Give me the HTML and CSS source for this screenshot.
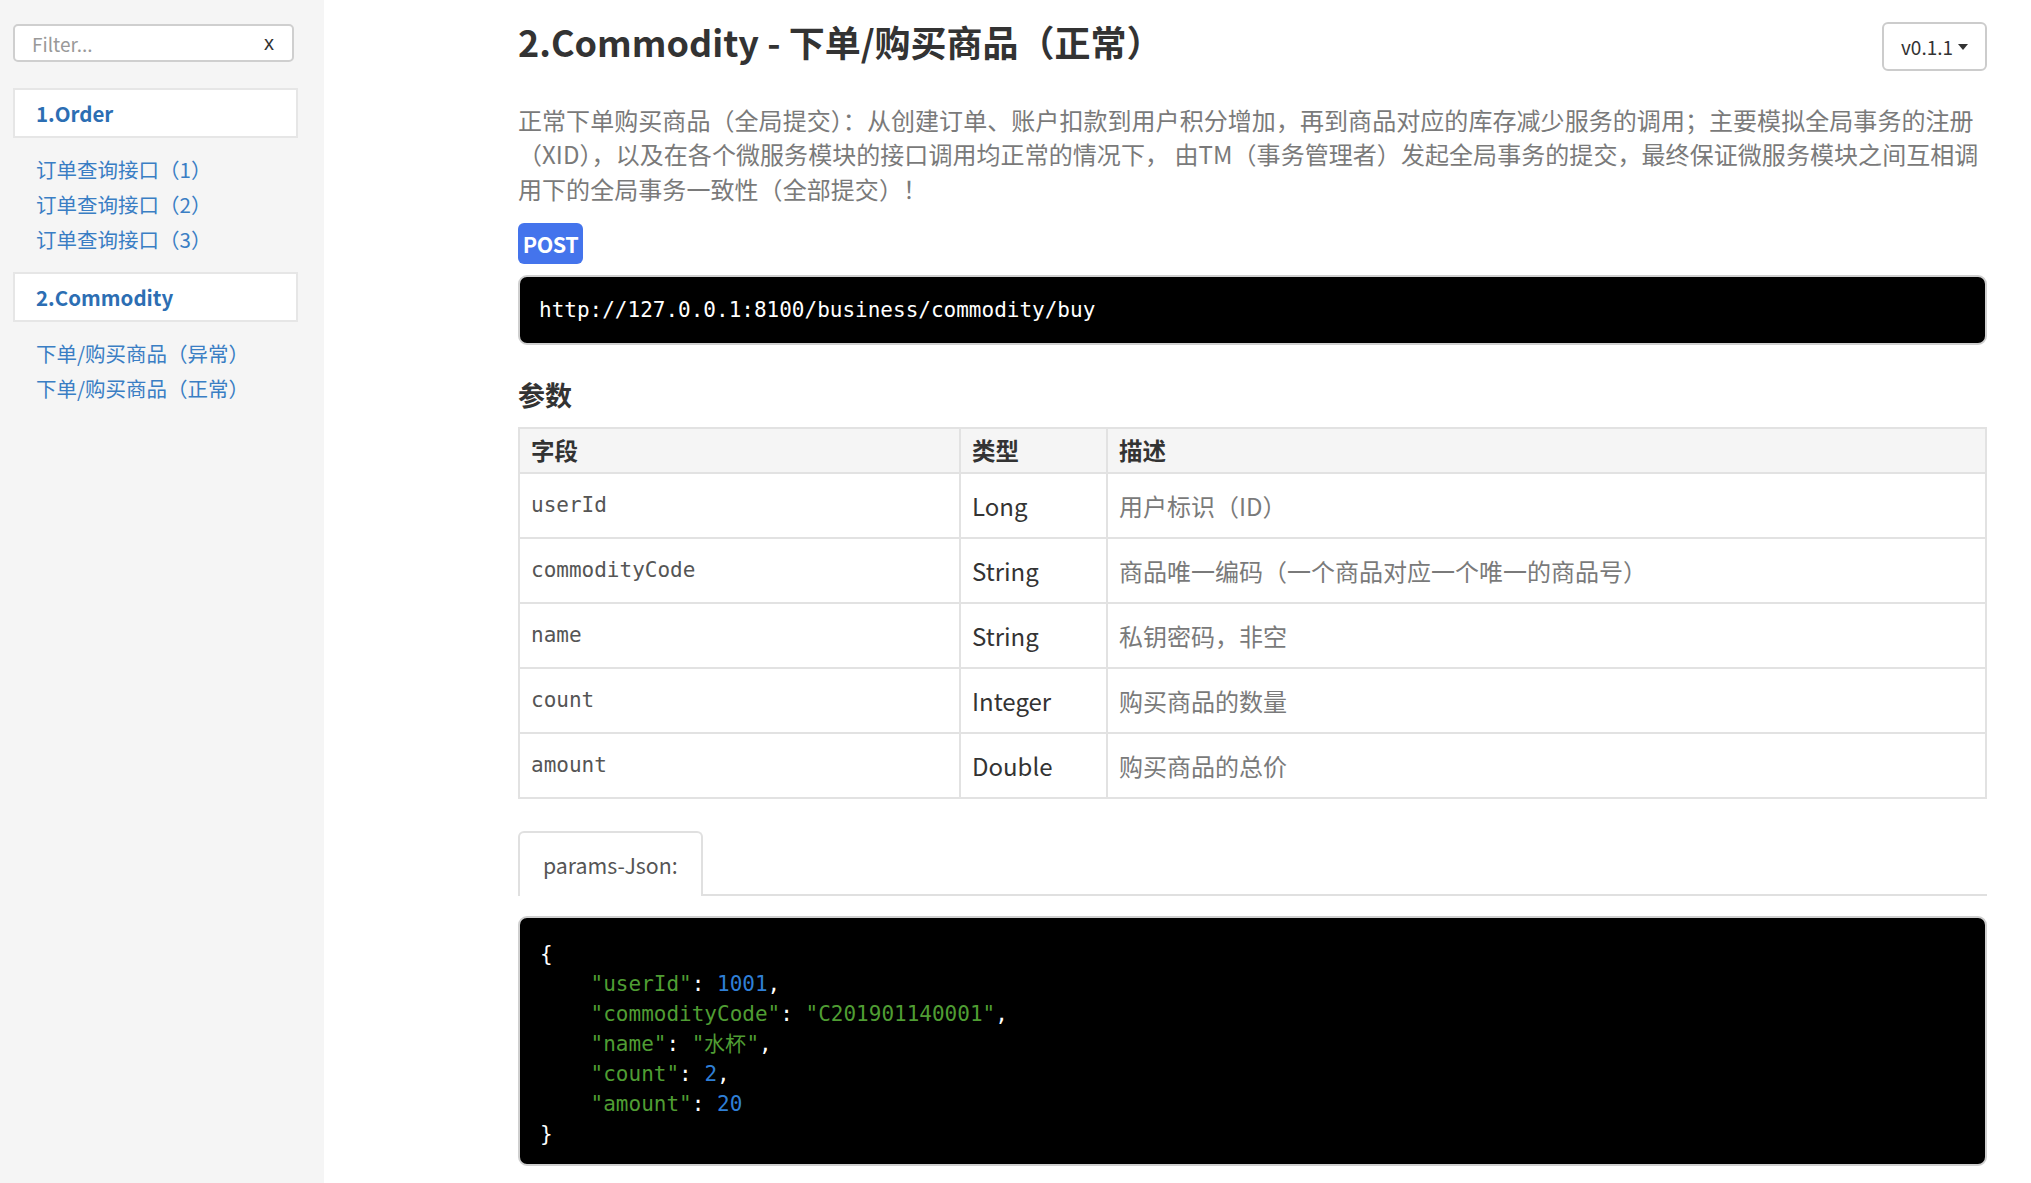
FILE: index.html
```html
<!DOCTYPE html>
<html lang="zh-CN">
<head>
<meta charset="utf-8">
<title>2.Commodity - 下单/购买商品（正常）</title>
<link rel="stylesheet" href="styles.css">
</head>
<body>
<div class="page">
  <aside class="sidebar">
    <div class="filter">
      <input class="filter-input" type="text" placeholder="Filter...">
      <span class="filter-clear">x</span>
    </div>
    <div class="nav-group">
      <div class="nav-header">1.Order</div>
      <ul class="nav-list">
        <li>订单查询接口（1）</li>
        <li>订单查询接口（2）</li>
        <li>订单查询接口（3）</li>
      </ul>
    </div>
    <div class="nav-group">
      <div class="nav-header">2.Commodity</div>
      <ul class="nav-list">
        <li>下单/购买商品（异常）</li>
        <li>下单/购买商品（正常）</li>
      </ul>
    </div>
  </aside>
  <main class="content">
    <div class="head-row">
      <h1 class="title">2.Commodity - 下单/购买商品（正常）</h1>
      <button class="version">v0.1.1<span class="caret"></span></button>
    </div>
    <p class="desc">正常下单购买商品（全局提交）：从创建订单、账户扣款到用户积分增加，再到商品对应的库存减少服务的调用；主要模拟全局事务的注册（XID），以及在各个微服务模块的接口调用均正常的情况下， 由TM（事务管理者）发起全局事务的提交，最终保证微服务模块之间互相调用下的全局事务一致性（全部提交）！</p>
    <span class="method">POST</span>
    <pre class="url">http://127.0.0.1:8100/business/commodity/buy</pre>
    <h2 class="section">参数</h2>
    <table class="params">
      <thead>
        <tr><th class="c1">字段</th><th class="c2">类型</th><th class="c3">描述</th></tr>
      </thead>
      <tbody>
        <tr><td class="field">userId</td><td class="type">Long</td><td class="dsc">用户标识（ID）</td></tr>
        <tr><td class="field">commodityCode</td><td class="type">String</td><td class="dsc">商品唯一编码（一个商品对应一个唯一的商品号）</td></tr>
        <tr><td class="field">name</td><td class="type">String</td><td class="dsc">私钥密码，非空</td></tr>
        <tr><td class="field">count</td><td class="type">Integer</td><td class="dsc">购买商品的数量</td></tr>
        <tr><td class="field">amount</td><td class="type">Double</td><td class="dsc">购买商品的总价</td></tr>
      </tbody>
    </table>
    <div class="tabs">
      <div class="tab active">params-Json:</div>
    </div>
    <pre class="code">{
    <span class="k">"userId"</span>: <span class="n">1001</span>,
    <span class="k">"commodityCode"</span>: <span class="s">"C201901140001"</span>,
    <span class="k">"name"</span>: <span class="s">"水杯"</span>,
    <span class="k">"count"</span>: <span class="n">2</span>,
    <span class="k">"amount"</span>: <span class="n">20</span>
}</pre>
  </main>
</div>
</body>
</html>
```
FILE: styles.css
```css
html, body {
  margin: 0;
  padding: 0;
  background: #fff;
}
body {
  font-family: "Noto Sans CJK SC", "Noto Sans", sans-serif;
  color: #333;
}
.page {
  display: flex;
  min-height: 1183px;
}
.sidebar {
  width: 324px;
  flex: 0 0 324px;
  background: #f5f5f5;
  padding: 24px 26px 0 13px;
  box-sizing: border-box;
}
.filter {
  display: flex;
  align-items: center;
  width: 281px;
  height: 38px;
  box-sizing: border-box;
  border: 2px solid #cfcfcf;
  border-radius: 5px;
  background: #fff;
  padding: 0 18px 0 17px;
}
.filter-input {
  flex: 1;
  border: 0;
  outline: 0;
  background: transparent;
  font-family: "Noto Sans CJK SC", sans-serif;
  font-size: 19px;
  color: #555;
  padding: 0;
  min-width: 0;
}
.filter-input::placeholder {
  color: #999;
}
.filter-clear {
  font-family: "Liberation Sans", sans-serif;
  font-size: 20px;
  color: #333;
}
.nav-group {
  margin-top: 26px;
}
.nav-group + .nav-group {
  margin-top: 15px;
}
.nav-header {
  width: 285px;
  height: 50px;
  box-sizing: border-box;
  border: 2px solid #e6e6e6;
  background: #fff;
  padding-left: 21px;
  display: flex;
  align-items: center;
  font-size: 20.5px;
  font-weight: 700;
  color: #2c6eb3;
}
.nav-list {
  list-style: none;
  margin: 14px 0 0 0;
  padding: 0 0 0 23px;
}
.nav-list li {
  height: 35px;
  line-height: 35px;
  font-size: 20.5px;
  color: #3a7ec4;
}
.content {
  flex: 1;
  padding: 22px 44px 0 194px;
  min-width: 0;
}
.head-row {
  display: flex;
  justify-content: space-between;
  align-items: flex-start;
  height: 49px;
}
.title {
  margin: -3px 0 0 0;
  font-size: 36px;
  font-weight: 700;
  line-height: 44px;
  color: #333;
}
.version {
  width: 105px;
  height: 49px;
  box-sizing: border-box;
  border: 2px solid #cccccc;
  border-radius: 6px;
  background: #fff;
  font-family: "Noto Sans CJK SC", sans-serif;
  font-size: 19px;
  color: #333;
  display: flex;
  align-items: center;
  justify-content: center;
  padding: 0;
}
.caret {
  display: inline-block;
  width: 0;
  height: 0;
  margin-left: 5px;
  border-top: 6px solid #333;
  border-left: 5px solid transparent;
  border-right: 5px solid transparent;
}
.desc {
  margin: 32px 0 0 0;
  font-size: 24px;
  line-height: 34.3px;
  letter-spacing: 0.06px;
  color: #7a7a7a;
}
.method {
  display: inline-block;
  margin-top: 17px;
  width: 65px;
  height: 41px;
  line-height: 41px;
  text-align: center;
  background: #4474ec;
  color: #fff;
  font-size: 21.5px;
  font-weight: 700;
  border-radius: 6px;
  letter-spacing: -0.5px;
  vertical-align: top;
}
.url {
  margin: 11px 0 0 0;
  height: 70px;
  box-sizing: border-box;
  background: #000;
  color: #fff;
  border: 2px solid #cfcfcf;
  border-radius: 9px;
  padding: 0 19px;
  display: flex;
  align-items: center;
  font-family: "DejaVu Sans Mono", monospace;
  font-size: 21px;
}
.section {
  margin: 31px 0 0 0;
  font-size: 27px;
  line-height: 38px;
  font-weight: 700;
  color: #333;
}
.params {
  margin-top: 13px;
  width: 100%;
  border-collapse: collapse;
  border: 2px solid #e2e2e2;
}
.params th, .params td {
  border: 2px solid #e2e2e2;
  padding: 0 11px;
  text-align: left;
  vertical-align: middle;
}
.params th {
  height: 43px;
  background: #f5f5f5;
  font-size: 23.5px;
  font-weight: 700;
  color: #333;
}
.params td {
  height: 63px;
  font-size: 24px;
}
.c1 { width: 417px; }
.c2 { width: 123px; }
.field {
  font-family: "DejaVu Sans Mono", monospace;
  font-size: 21px !important;
  color: #555;
}
.type {
  color: #333;
}
.dsc {
  color: #7a7a7a;
}
.tabs {
  margin-top: 32px;
  display: flex;
  border-bottom: 2px solid #e0e0e0;
}
.tab {
  height: 65px;
  box-sizing: border-box;
  padding: 0 23px;
  display: flex;
  align-items: center;
  white-space: nowrap;
  font-size: 21.3px;
  color: #555;
  border: 2px solid #e0e0e0;
  border-bottom: 0;
  border-radius: 6px 6px 0 0;
  margin-bottom: -2px;
  background: #fff;
  position: relative;
}
.tab.active::after {
  content: "";
  position: absolute;
  left: 0;
  right: 0;
  bottom: -2px;
  height: 2px;
  background: #fff;
}
.code {
  margin: 20px 0 0 0;
  height: 250px;
  box-sizing: border-box;
  background: #000;
  color: #fff;
  border: 2px solid #cfcfcf;
  border-radius: 9px;
  padding: 21px 20px 0 20px;
  font-family: "DejaVu Sans Mono", monospace;
  font-size: 21px;
  line-height: 30px;
}
.code .k, .code .s {
  color: #4f9d33;
}
.code .n {
  color: #2f7fd6;
}
```
